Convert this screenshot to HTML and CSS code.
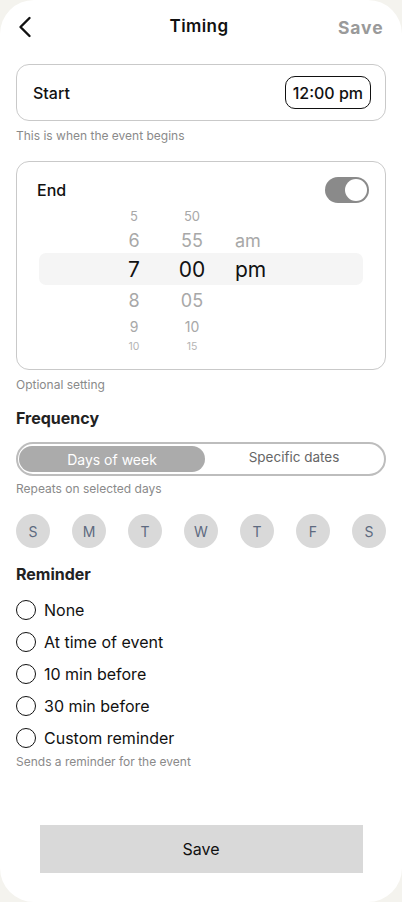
FILE: index.html
```html
<!DOCTYPE html>
<html lang="en">

<head>
    <meta charset="UTF-8">
    <meta name="viewport" content="width=device-width, initial-scale=1.0">
    <title>Timing</title>
    <link rel="stylesheet" href="styles.css">
</head>

<body>

    <div class="screen">
        <header class="topbar">
            <button class="back" aria-label="Back">
                <svg width="14" height="22" viewBox="0 0 14 22">
                    <path d="M11.5 2 L2.5 11 L11.5 20" fill="none" stroke="#111" stroke-width="2.4"
                        stroke-linecap="round" stroke-linejoin="round" />
                </svg>
            </button>
            <h1>Timing</h1>
            <span class="top-save">Save</span>
        </header>

        <div class="card start-card">
            <span class="card-label">Start</span>
            <span class="time-pill">12:00 pm</span>
        </div>
        <p class="hint">This is when the event begins</p>

        <div class="card end-card">
            <div class="end-head">
                <span class="card-label">End</span>
                <span class="toggle"><span class="knob"></span></span>
            </div>
            <div class="picker">
                <div class="prow r1"><span>5</span><span>50</span><span></span></div>
                <div class="prow r2"><span>6</span><span>55</span><span>am</span></div>
                <div class="prow r3 selected"><span>7</span><span>00</span><span>pm</span></div>
                <div class="prow r2 r4"><span>8</span><span>05</span><span></span></div>
                <div class="prow r5"><span>9</span><span>10</span><span></span></div>
                <div class="prow r6"><span>10</span><span>15</span><span></span></div>
            </div>
        </div>
        <p class="hint">Optional setting</p>

        <h2 class="section-title freq-title">Frequency</h2>
        <div class="segmented">
            <span class="seg active">Days of week</span>
            <span class="seg">Specific dates</span>
        </div>
        <p class="hint tight">Repeats on selected days</p>

        <div class="days">
            <span class="day">S</span>
            <span class="day">M</span>
            <span class="day">T</span>
            <span class="day">W</span>
            <span class="day">T</span>
            <span class="day">F</span>
            <span class="day">S</span>
        </div>

        <h2 class="section-title reminder-title">Reminder</h2>
        <div class="radios">
            <label class="radio"><span class="circle"></span>None</label>
            <label class="radio"><span class="circle"></span>At time of event</label>
            <label class="radio"><span class="circle"></span>10 min before</label>
            <label class="radio"><span class="circle"></span>30 min before</label>
            <label class="radio"><span class="circle"></span>Custom reminder</label>
        </div>
        <p class="hint tight sends">Sends a reminder for the event</p>

        <button class="save-btn">Save</button>
    </div>

</body>

</html>
```

FILE: styles.css
```css
body {
    font-family: Inter, 'Liberation Sans', sans-serif;
    background-color: #f4f3ee;
    margin: 0;
    padding: 0;
    color: #111;
}

.screen {
    width: 402px;
    height: 902px;
    box-sizing: border-box;
    background-color: #fff;
    border-radius: 34px;
    padding: 0 16px;
    overflow: hidden;
}

.topbar {
    display: flex;
    align-items: center;
    justify-content: space-between;
    height: 52px;
}

.back {
    background: none;
    border: none;
    padding: 0;
    margin-left: 2px;
    width: 40px;
    display: flex;
    align-items: center;
    margin-top: 2px;
}

.topbar h1 {
    font-size: 17px;
    font-weight: 600;
    margin: 0 0 0 2px;
    letter-spacing: 0.4px;
}

.top-save {
    width: 46px;
    font-size: 17.5px;
    font-weight: 700;
    color: #9a9a9a;
    margin-top: 2px;
    margin-right: 2px;
    letter-spacing: 0.9px;
}

.card {
    border: 1px solid #c9c9c9;
    border-radius: 13px;
}

.start-card {
    margin-top: 12px;
    height: 57px;
    box-sizing: border-box;
    display: flex;
    align-items: center;
    justify-content: space-between;
    padding: 0 14px 0 16px;
}

.card-label {
    font-size: 16px;
    font-weight: 500;
}

.time-pill {
    border: 1.5px solid #111;
    border-radius: 10px;
    height: 33px;
    box-sizing: border-box;
    padding: 0 7px;
    display: flex;
    align-items: center;
    font-size: 16px;
    font-weight: 500;
}

.hint {
    margin: 7px 0 0;
    font-size: 12px;
    color: #8a8a8a;
}

.hint.tight {
    margin-top: 5px;
}

.end-card {
    margin-top: 18px;
    padding: 15px 16px 12px 20px;
}

.end-head {
    display: flex;
    justify-content: space-between;
    align-items: center;
    height: 26px;
}

.toggle {
    width: 44px;
    height: 26px;
    border-radius: 13px;
    background-color: #8a8a8a;
    position: relative;
}

.knob {
    position: absolute;
    right: 2px;
    top: 2px;
    width: 22px;
    height: 22px;
    border-radius: 50%;
    background-color: #fff;
}

.picker {
    margin: 0 6px 0 2px;
}

.prow {
    display: grid;
    grid-template-columns: 40px 40px 40px;
    column-gap: 18px;
    padding-left: 75px;
    align-items: center;
    color: #a8a8a8;
    text-align: center;
}

.prow span:nth-child(3) {
    text-align: left;
    padding-left: 5px;
}

.r1 {
    height: 25px;
    font-size: 13px;
}

.r2 {
    height: 25px;
    font-size: 18px;
}

.r3 {
    height: 32px;
    font-size: 21px;
    color: #111;
    background-color: #f5f5f5;
    border-radius: 7px;
}

.r4 {
    height: 31px;
}

.r5 {
    height: 21px;
    font-size: 14px;
}

.r6 {
    height: 20px;
    font-size: 10.5px;
    line-height: 14px;
    align-items: start;
    padding-top: 3px;
    box-sizing: border-box;
    color: #b4b4b4;
}

.section-title {
    font-size: 16px;
    font-weight: 700;
    margin: 16px 0 0;
    color: #222;
}

.freq-title {
    margin-top: 16px;
}

.segmented {
    margin-top: 14px;
    height: 34px;
    box-sizing: border-box;
    border: 2px solid #bdbdbd;
    border-radius: 17px;
    display: flex;
    padding: 2px 1px;
}

.seg {
    flex: 1;
    display: flex;
    align-items: center;
    justify-content: center;
    font-size: 13.5px;
    color: #666;
    padding-bottom: 4px;
}

.seg.active {
    flex: 0 0 186px;
    background-color: #ababab;
    color: #fff;
    border-radius: 14px;
    font-size: 14px;
    padding-bottom: 0;
}

.days {
    margin-top: 18px;
    display: flex;
    justify-content: space-between;
}

.day {
    width: 34px;
    height: 34px;
    border-radius: 50%;
    background-color: #d9d9d9;
    color: #5d6a80;
    font-size: 14px;
    display: flex;
    align-items: center;
    justify-content: center;
}

.radios {
    margin-top: 15px;
    display: flex;
    flex-direction: column;
    gap: 10px;
}

.radio {
    display: flex;
    align-items: center;
    gap: 8px;
    height: 22px;
    font-size: 16px;
}

.circle {
    width: 18px;
    height: 18px;
    border: 1.5px solid #111;
    border-radius: 50%;
}

.sends {
    margin-top: 8px;
}

.save-btn {
    display: block;
    margin: 56px auto 0;
    width: 323px;
    height: 48px;
    border: none;
    background-color: #d9d9d9;
    font-family: Inter, 'Liberation Sans', sans-serif;
    font-size: 16px;
    color: #111;
}
```
